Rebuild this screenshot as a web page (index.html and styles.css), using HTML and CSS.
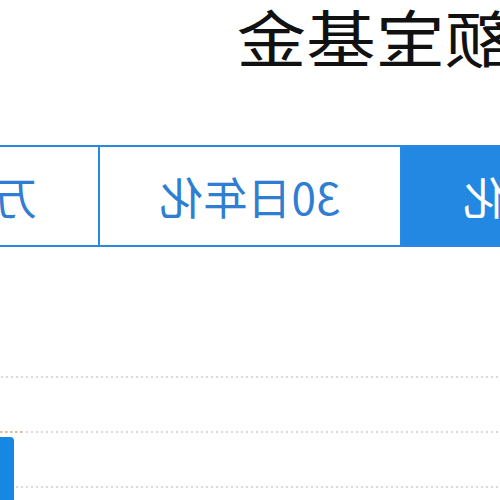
FILE: index.html
```html
<!DOCTYPE html>
<html lang="zh-CN">
<head>
<meta charset="utf-8">
<title>余额宝基金</title>
<link rel="stylesheet" href="styles.css">
</head>
<body>
  <div class="page">
    <h1 class="title"><span class="title-text">余额宝基金</span></h1>
    <div class="tabs">
      <div class="tab is-active">七日年化</div>
      <div class="tab">30日年化</div>
      <div class="tab">万份收益</div>
    </div>
    <div class="chart">
      <div class="grid-line"></div>
      <div class="grid-line"></div>
      <div class="grid-line"></div>
      <div class="marker"></div>
      <div class="bar"></div>
    </div>
  </div>
</body>
</html>
```

FILE: styles.css
```css
html, body {
  margin: 0;
  padding: 0;
  overflow: hidden;
  background: #fff;
}

body {
  width: 500px;
  height: 500px;
  transform: scaleX(-1);
  font-family: "Noto Sans CJK SC", "Noto Sans", sans-serif;
}

.page {
  width: 906px;
  margin-left: -203px;
}

.title {
  margin: 0;
  padding-left: 119px;
  height: 73px;
  font-size: 62px;
  line-height: 73px;
  font-weight: 400;
  color: #111;
  white-space: nowrap;
}

/* the heading face is set slightly wide */
.title-text {
  display: inline-block;
  transform: scaleX(1.12);
  transform-origin: left center;
}

.tabs {
  display: flex;
  height: 102px;
  margin-top: 72px;
  border: 2px solid #2a88e0;
  box-sizing: border-box;
}

.tab {
  flex: 1;
  display: flex;
  align-items: center;
  justify-content: center;
  font-size: 44px;
  color: #2f7ed2;
  white-space: nowrap;
}

.tab + .tab {
  border-left: 2px solid #2a88e0;
}

.tab.is-active {
  background: #2288e2;
  color: #fff;
}

.chart {
  position: relative;
  display: flex;
  flex-direction: column;
  gap: 53px;
  padding-top: 129px;
  height: 253px;
  overflow: hidden;
}

.grid-line {
  height: 2px;
  background: repeating-linear-gradient(to right, #dadada 0 2px, transparent 2px 5px);
}

.marker {
  position: absolute;
  left: 681px;
  top: 184px;
  width: 24px;
  height: 2px;
  background: repeating-linear-gradient(to right, #f6b58a 0 2px, transparent 2px 5px);
}

.bar {
  position: absolute;
  left: 689px;
  top: 190px;
  width: 30px;
  height: 120px;
  background: #1787e4;
  border-radius: 4px 4px 0 0;
}
```
